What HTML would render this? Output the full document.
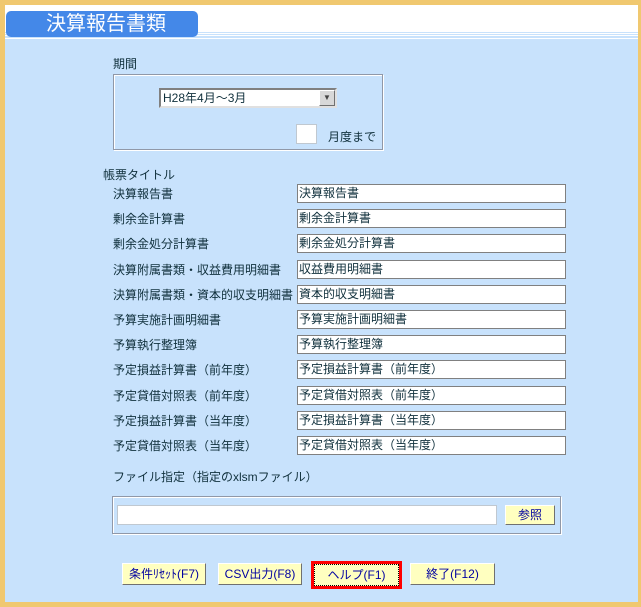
<!DOCTYPE html>
<html><head><meta charset="utf-8"><style>
*{margin:0;padding:0;box-sizing:border-box}
body{width:641px;height:607px;background:#f0c870;position:relative;overflow:hidden;font-family:"Liberation Sans","Noto Sans CJK JP",sans-serif;font-size:12px;color:#10303c}
.a{position:absolute}
#main{left:5px;top:5px;width:633px;height:597px;background:#c8e2fc}
#hd{left:5px;top:5px;width:633px;height:27px;background:#fff}
.ln{left:5px;width:633px;height:1px;background:#fff}
#title{left:6px;top:11px;width:192px;height:26px;background:#4488e8;border-radius:5px;color:#fff;font-size:20px;line-height:26px;padding-left:40px}
.lbl{left:113px;line-height:16px}
.tb{left:297px;width:269px;height:19px;background:#fff;border:1px solid #808080;line-height:17px;padding-left:1px}
.grp{border:1px solid #9098a8;box-shadow:1px 1px 0 #fff inset,1px 1px 0 #fff}
.btn{top:563px;height:22px;background:#ffffc0;border:1px solid;border-color:#fff #707070 #707070 #fff;color:#0000a0;text-align:center;line-height:20px}
</style></head><body>
<div id="main" class="a"></div>
<div id="hd" class="a"></div>
<div class="a" style="left:5px;top:32px;width:633px;height:8px;background:#c8e2fc"></div>
<div class="a ln" style="top:33px"></div><div class="a ln" style="top:35px"></div><div class="a ln" style="top:38px"></div>
<div id="title" class="a">決算報告書類</div>
<div class="a" style="left:113px;top:55px">期間</div>
<div class="a grp" style="left:113px;top:74px;width:270px;height:76px"></div>
<div class="a" style="left:159px;top:88px;width:178px;height:20px;background:#fff;border:2px solid;border-color:#808080 #e0e0e0 #e0e0e0 #808080;line-height:16px;padding-left:2px">H28年4月～3月</div>
<div class="a" style="left:319px;top:90px;width:16px;height:16px;background:#d8d8d8;border:1px solid;border-color:#fff #707070 #707070 #fff;font-size:8px;text-align:center;line-height:14px;color:#444">▼</div>
<div class="a" style="left:296px;top:124px;width:21px;height:20px;background:#fff;border:1px solid #c0c8d0"></div>
<div class="a" style="left:328px;top:128px">月度まで</div>
<div class="a" style="left:103px;top:166px">帳票タイトル</div>
<div class="a lbl" style="top:186px">決算報告書</div><div class="a tb" style="top:184px">決算報告書</div>
<div class="a lbl" style="top:211px">剰余金計算書</div><div class="a tb" style="top:209px">剰余金計算書</div>
<div class="a lbl" style="top:236px">剰余金処分計算書</div><div class="a tb" style="top:234px">剰余金処分計算書</div>
<div class="a lbl" style="top:262px">決算附属書類・収益費用明細書</div><div class="a tb" style="top:260px">収益費用明細書</div>
<div class="a lbl" style="top:287px">決算附属書類・資本的収支明細書</div><div class="a tb" style="top:285px">資本的収支明細書</div>
<div class="a lbl" style="top:312px">予算実施計画明細書</div><div class="a tb" style="top:310px">予算実施計画明細書</div>
<div class="a lbl" style="top:337px">予算執行整理簿</div><div class="a tb" style="top:335px">予算執行整理簿</div>
<div class="a lbl" style="top:362px">予定損益計算書（前年度）</div><div class="a tb" style="top:360px">予定損益計算書（前年度）</div>
<div class="a lbl" style="top:388px">予定貸借対照表（前年度）</div><div class="a tb" style="top:386px">予定貸借対照表（前年度）</div>
<div class="a lbl" style="top:413px">予定損益計算書（当年度）</div><div class="a tb" style="top:411px">予定損益計算書（当年度）</div>
<div class="a lbl" style="top:438px">予定貸借対照表（当年度）</div><div class="a tb" style="top:436px">予定貸借対照表（当年度）</div>
<div class="a" style="left:113px;top:468px">ファイル指定（指定のxlsmファイル）</div>
<div class="a grp" style="left:112px;top:496px;width:449px;height:38px"></div>
<div class="a" style="left:117px;top:505px;width:380px;height:20px;background:#fff;border:1px solid #c0c8d0"></div>
<div class="a btn" style="left:505px;top:505px;width:50px;height:20px;line-height:18px">参照</div>
<div class="a btn" style="left:122px;width:84px">条件ﾘｾｯﾄ(F7)</div>
<div class="a btn" style="left:218px;width:84px">CSV出力(F8)</div>
<div class="a" style="left:311px;top:561px;width:91px;height:28px;border:3px solid #f00"></div>
<div class="a btn" style="left:314px;top:564px;width:85px;border:1px dotted #000">ヘルプ(F1)</div>
<div class="a btn" style="left:410px;width:85px">終了(F12)</div>
</body></html>
